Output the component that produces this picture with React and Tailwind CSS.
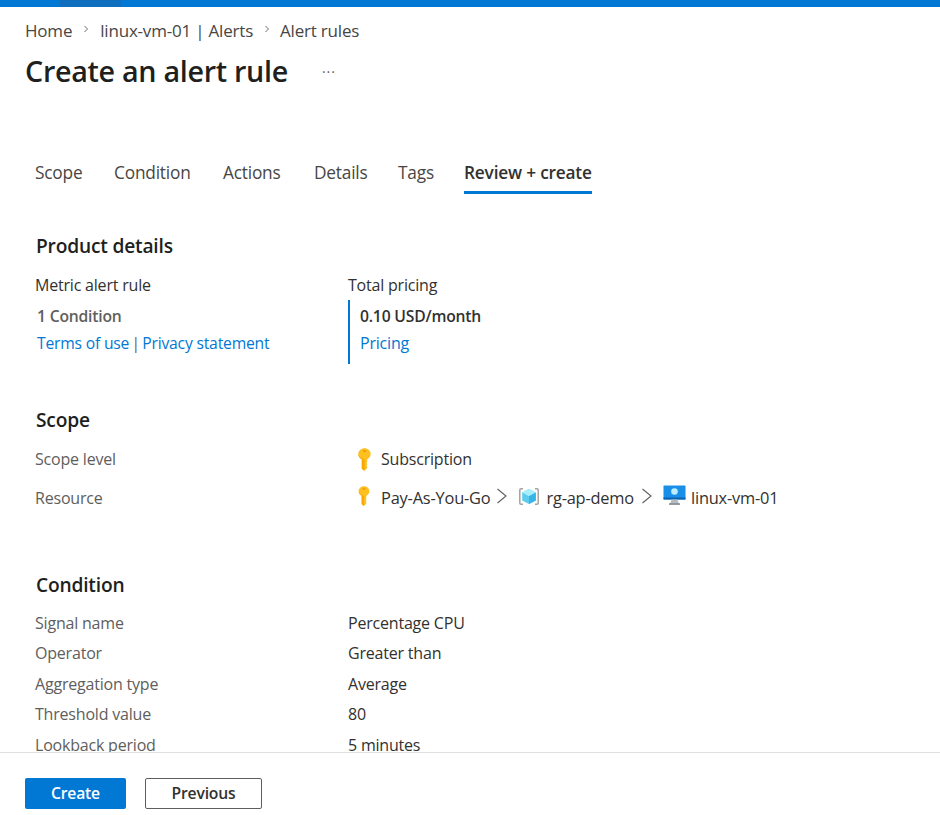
import React from 'react';

const font = "font-['Open_Sans','Noto_Sans',sans-serif]";

const KeyIcon = ({ className }) => (
  <svg className={className} viewBox="0 0 13 23">
    <path d="M6.500 0.300C9.900 0.300 12.700 2.900 12.700 6c0 2.400-1.600 4.300-3.500 5.200V14l-.8.900.8.900v1.100l-.8.900.8.900v1.300L6.900 22.600H6L3.800 20.800V11.200C1.900 10.400.300 8.400.300 6 .300 2.900 3.100.300 6.500.300z" fill="#fdc020" />
    <path d="M6.500 11.400V22.600H6L3.800 20.800V11.200C2 10.400.300 8.400.300 6c1.400 3.400 3.900 5 6.200 5.400z" fill="#f8a800" />
    <ellipse cx="6.500" cy="3.100" rx="1.700" ry="1.100" fill="#ee9a05" />
  </svg>
);

const ResourceGroupIcon = () => (
  <svg className="w-5 h-[17px]" viewBox="0 0 20 17">
    <path d="M4 .8H2Q.8.800.8 2v13q0 1.200 1.200 1.200h2" fill="none" stroke="#a3a3a3" strokeWidth="1.500" />
    <path d="M16 .8h2q1.200 0 1.200 1.200v13q0 1.200-1.200 1.200h-2" fill="none" stroke="#a3a3a3" strokeWidth="1.500" />
    <path d="M10 1l6.800 3.600v8L10 16l-6.800-3.400v-8z" fill="#5ccbee" />
    <path d="M10 1l6.800 3.600L10 8.200 3.200 4.600z" fill="#a5effd" />
    <path d="M10 8.200l6.800-3.600v8L10 16z" fill="#35b4e8" />
  </svg>
);

const VmIcon = () => (
  <svg className="w-[23px] h-5" viewBox="0 0 23 20">
    <rect x="0.500" y="0.500" width="22" height="14" rx="0.800" fill="#1a8fe8" />
    <rect x="0.500" y="12.500" width="22" height="2" fill="#0a62b0" />
    <circle cx="11.500" cy="6.500" r="3.300" fill="#bdeeff" />
    <path d="M7 19h9l-1.700-4.500H8.700z" fill="#b4bbc2" />
    <rect x="6" y="18.300" width="11" height="1.500" fill="#7c858e" />
  </svg>
);

const Chevron = () => (
  <svg className="w-3 h-4 text-[#605e5c]" viewBox="0 0 12 16" fill="none" stroke="currentColor" strokeWidth="1.100">
    <path d="M1.500 1L10 8l-8.500 7" />
  </svg>
);

const BreadChevron = () => (
  <svg className="w-2 h-2 text-[#605e5c] -mt-1" viewBox="0 0 8 8" fill="none" stroke="currentColor" strokeWidth="0.900">
    <path d="M2.500 1L5.500 4 2.500 7" />
  </svg>
);

const tabs = [
  ['Scope', 'w-[79px]'],
  ['Condition', 'w-[109px]'],
  ['Actions', 'w-[91px]'],
  ['Details', 'w-[84px]'],
  ['Tags', 'w-[66px]'],
];

const conditionRows = [
  ['Signal name', 'Percentage CPU'],
  ['Operator', 'Greater than'],
  ['Aggregation type', 'Average'],
  ['Threshold value', '80'],
  ['Lookback period', '5 minutes'],
];

const SectionTitle = ({ children }) => (
  <h2 className="pl-px text-[19.2px] leading-[26px] font-semibold text-[#201f1e]">{children}</h2>
);

export default function App() {
  return (
    <div className={`${font} w-[940px] h-[815px] bg-white flex flex-col overflow-hidden tracking-[-0.2px]`}>
      <div className="h-[7px] shrink-0 bg-[#0078d4] pl-[60px]">
        <div className="h-[7px] w-[61px] bg-[#106ebe]" />
      </div>

      <div className="flex-1 min-h-0 overflow-hidden">
        <div className="pl-[25px] pt-[14px]">
          <div className="flex items-center h-5 text-[17px] text-[#484644]">
            <span>Home</span>
            <span className="mx-[10px]"><BreadChevron /></span>
            <span>linux-vm-01 | Alerts</span>
            <span className="mx-[9.5px]"><BreadChevron /></span>
            <span>Alert rules</span>
          </div>
          <div className="flex items-center mt-[10px] h-10">
            <h1 className="text-[28.7px] font-semibold text-[#201f1e] tracking-[-0.3px]">Create an alert rule</h1>
            <span className="ml-[34px] text-[14px] text-[#605e5c] tracking-[1px]">···</span>
          </div>
        </div>

        <nav className="flex items-start pl-[35px] pt-px mt-[67px] h-[42px] text-[17.3px] text-[#484644]">
          {tabs.map(([t, w]) => (
            <span key={t} className={`${w} leading-7`}>{t}</span>
          ))}
          <span className="leading-7 font-semibold text-[#323130] text-[17.3px] border-b-[3px] border-[#0078d4] h-[35px]">Review + create</span>
        </nav>

        <section className="pl-[35px] mt-[33px]">
          <SectionTitle>Product details</SectionTitle>
          <div className="flex mt-[16px] text-[16px]">
            <div className="w-[313px]">
              <div className="h-5 leading-5 text-[#323130]">Metric alert rule</div>
              <div className="h-5 leading-5 mt-[11px] pl-[2px] text-[15.7px] font-semibold text-[#605e5c]">1 Condition</div>
              <div className="flex h-5 leading-5 mt-[7px] pl-[2px] text-[15.7px] text-[#605e5c]">
                <span className="text-[#0078d4]">Terms of use</span>
                <span className="w-[13px] text-center">|</span>
                <span className="text-[#0078d4]">Privacy statement</span>
              </div>
            </div>
            <div>
              <div className="h-5 leading-5 text-[#323130]">Total pricing</div>
              <div className="mt-[5px] border-l-2 border-[#0078d4] pl-[10px] pt-[6px] h-[64px]">
                <div className="h-5 leading-5 text-[15.7px] font-semibold text-[#323130]">0.10 USD/month</div>
                <div className="h-5 leading-5 mt-[7px] text-[#0078d4]">Pricing</div>
              </div>
            </div>
          </div>
        </section>

        <section className="pl-[35px] mt-[43px] text-[16px]">
          <SectionTitle>Scope</SectionTitle>
          <div className="flex mt-[12px] h-7 items-center">
            <div className="w-[313px] text-[#605e5c]">Scope level</div>
            <div className="flex items-center text-[#323130]">
              <KeyIcon className="w-[13px] h-[23px] ml-[10px] mr-[10px]" />
              Subscription
            </div>
          </div>
          <div className="flex mt-[11px] h-7 items-center">
            <div className="w-[313px] text-[#605e5c]">Resource</div>
            <div className="flex items-center text-[16.4px] text-[#323130]">
              <KeyIcon className="w-[12px] h-[20px] ml-[10px] mr-[11px] -mt-[4px]" />
              <span>Pay-As-You-Go</span>
              <span className="ml-[6px] mr-[11px] -mt-[3px]"><Chevron /></span>
              <span className="mr-[7px] -mt-[3px]"><ResourceGroupIcon /></span>
              <span>rg-ap-demo</span>
              <span className="ml-[7px] mr-[10px] -mt-[3px]"><Chevron /></span>
              <span className="mr-[5px] -mt-[5px]"><VmIcon /></span>
              <span>linux-vm-01</span>
            </div>
          </div>
        </section>

        <section className="pl-[35px] mt-[60px] text-[16px]">
          <SectionTitle>Condition</SectionTitle>
          <div className="mt-[15px]">
            {conditionRows.map(([k, v]) => (
              <div key={k} className="flex h-[30.4px] leading-5">
                <div className="w-[313px] text-[#605e5c]">{k}</div>
                <div className="text-[#323130]">{v}</div>
              </div>
            ))}
          </div>
        </section>
      </div>

      <footer className="h-[63px] shrink-0 border-t border-[#e1dfdd] bg-white flex items-start pl-[25px] pt-[25px] gap-[19px] text-[15.7px] font-semibold">
        <button className="w-[101px] h-[31px] rounded-[2px] bg-[#0078d4] text-white">Create</button>
        <button className="w-[117px] h-[31px] rounded-[2px] border border-[#605e5c] text-[#323130] bg-white">Previous</button>
      </footer>
    </div>
  );
}
